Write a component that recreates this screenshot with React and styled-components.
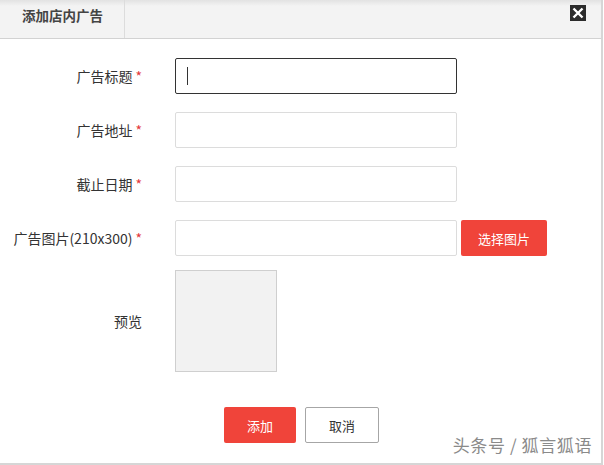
import React from "react";
import styled, { createGlobalStyle } from "styled-components";

const GlobalStyle = createGlobalStyle`
  html, body {
    margin: 0;
    padding: 0;
    background: #fff;
  }
  body {
    font-family: "Microsoft YaHei", "Noto Sans CJK SC", "Liberation Sans", sans-serif;
    font-size: 13px;
    color: #333;
  }
`;

const Dialog = styled.div`
  position: relative;
  width: 601px;
  height: 463px;
  border-right: 2px solid #d6d6d6;
  border-bottom: 2px solid #d6d6d6;
  background: #fff;
`;

const Header = styled.div`
  height: 38px;
  display: flex;
  align-items: stretch;
  justify-content: space-between;
  background: linear-gradient(#e2e2e2 0px, #f3f3f3 6px, #f3f3f3 100%);
  border-bottom: 1px solid #d2d2d2;
`;

const Tab = styled.div`
  width: 125px;
  box-sizing: border-box;
  padding: 5px 0 0 22px;
  border-right: 1px solid #dcdcdc;
  font-size: 13.5px;
  font-weight: bold;
  color: #444;
`;

const Close = styled.button`
  width: 16px;
  height: 16px;
  margin: 5px 15px 0 0;
  padding: 0;
  border: none;
  background: #2b2b2b;
  display: flex;
  align-items: center;
  justify-content: center;
  cursor: pointer;
`;

const Form = styled.div`
  display: grid;
  grid-template-columns: 142px auto;
  column-gap: 33px;
  row-gap: 18px;
  padding-top: 19px;
  align-items: center;
`;

const Label = styled.div`
  text-align: right;
  white-space: nowrap;
  font-size: 14px;
  color: #333;
  margin-top: ${(p) => (p.$shift ? p.$shift : -1)}px;
`;

const Star = styled.span`
  color: #e4393c;
  margin-left: 3px;
`;

const Field = styled.div`
  display: flex;
  align-items: center;
  gap: 4px;
`;

const Input = styled.input`
  width: 282px;
  height: 36px;
  box-sizing: border-box;
  border: 1px solid ${(p) => (p.$focus ? "#333" : "#dcdcdc")};
  border-radius: 2px;
  outline: none;
  padding: 0 12px;
  font-size: 13px;
  font-family: inherit;
  color: #333;
  background: #fff;
`;

const Caret = styled.span`
  position: absolute;
  left: 12px;
  top: 9px;
  width: 1px;
  height: 18px;
  background: #333;
`;

const InputWrap = styled.div`
  position: relative;
`;

const RedButton = styled.button`
  height: 36px;
  width: ${(p) => p.$w}px;
  border: none;
  border-radius: 2px;
  background: #f0443a;
  color: #fff;
  font-size: 13px;
  font-family: inherit;
  cursor: pointer;
`;

const PlainButton = styled.button`
  height: 36px;
  width: 74px;
  box-sizing: border-box;
  border: 1px solid #a6a6a6;
  border-radius: 2px;
  background: #fff;
  color: #333;
  font-size: 13px;
  font-family: inherit;
  cursor: pointer;
`;

const Preview = styled.div`
  width: 102px;
  height: 102px;
  box-sizing: border-box;
  border: 1px solid #cfcfcf;
  background: #f2f2f2;
  margin-top: -4px;
`;

const Actions = styled.div`
  display: flex;
  justify-content: center;
  gap: 9px;
  margin-top: 35px;
  padding-left: 2px;
`;

const Watermark = styled.div`
  position: absolute;
  right: 9px;
  bottom: 6px;
  font-size: 17px;
  color: #8a8a8a;
  letter-spacing: 0.6px;
`;

const rows = [
  { label: "广告标题", focus: true },
  { label: "广告地址" },
  { label: "截止日期" },
  { label: "广告图片(210x300)", pick: true },
];

export default function App() {
  return (
    <>
      <GlobalStyle />
      <Dialog>
        <Header>
          <Tab>添加店内广告</Tab>
          <Close aria-label="close">
            <svg width="12" height="12" viewBox="0 0 12 12">
              <path d="M1.5 1.5 L10.5 10.5 M10.5 1.5 L1.5 10.5" stroke="#fff" strokeWidth="2.4" />
            </svg>
          </Close>
        </Header>
        <Form>
          {rows.map((r) => (
            <React.Fragment key={r.label}>
              <Label>
                {r.label}
                <Star>*</Star>
              </Label>
              <Field>
                <InputWrap>
                  <Input $focus={r.focus} />
                  {r.focus && <Caret />}
                </InputWrap>
                {r.pick && <RedButton $w={86}>选择图片</RedButton>}
              </Field>
            </React.Fragment>
          ))}
          <Label $shift={-4}>预览</Label>
          <Preview />
        </Form>
        <Actions>
          <RedButton $w={72}>添加</RedButton>
          <PlainButton>取消</PlainButton>
        </Actions>
        <Watermark>头条号 / 狐言狐语</Watermark>
      </Dialog>
    </>
  );
}
